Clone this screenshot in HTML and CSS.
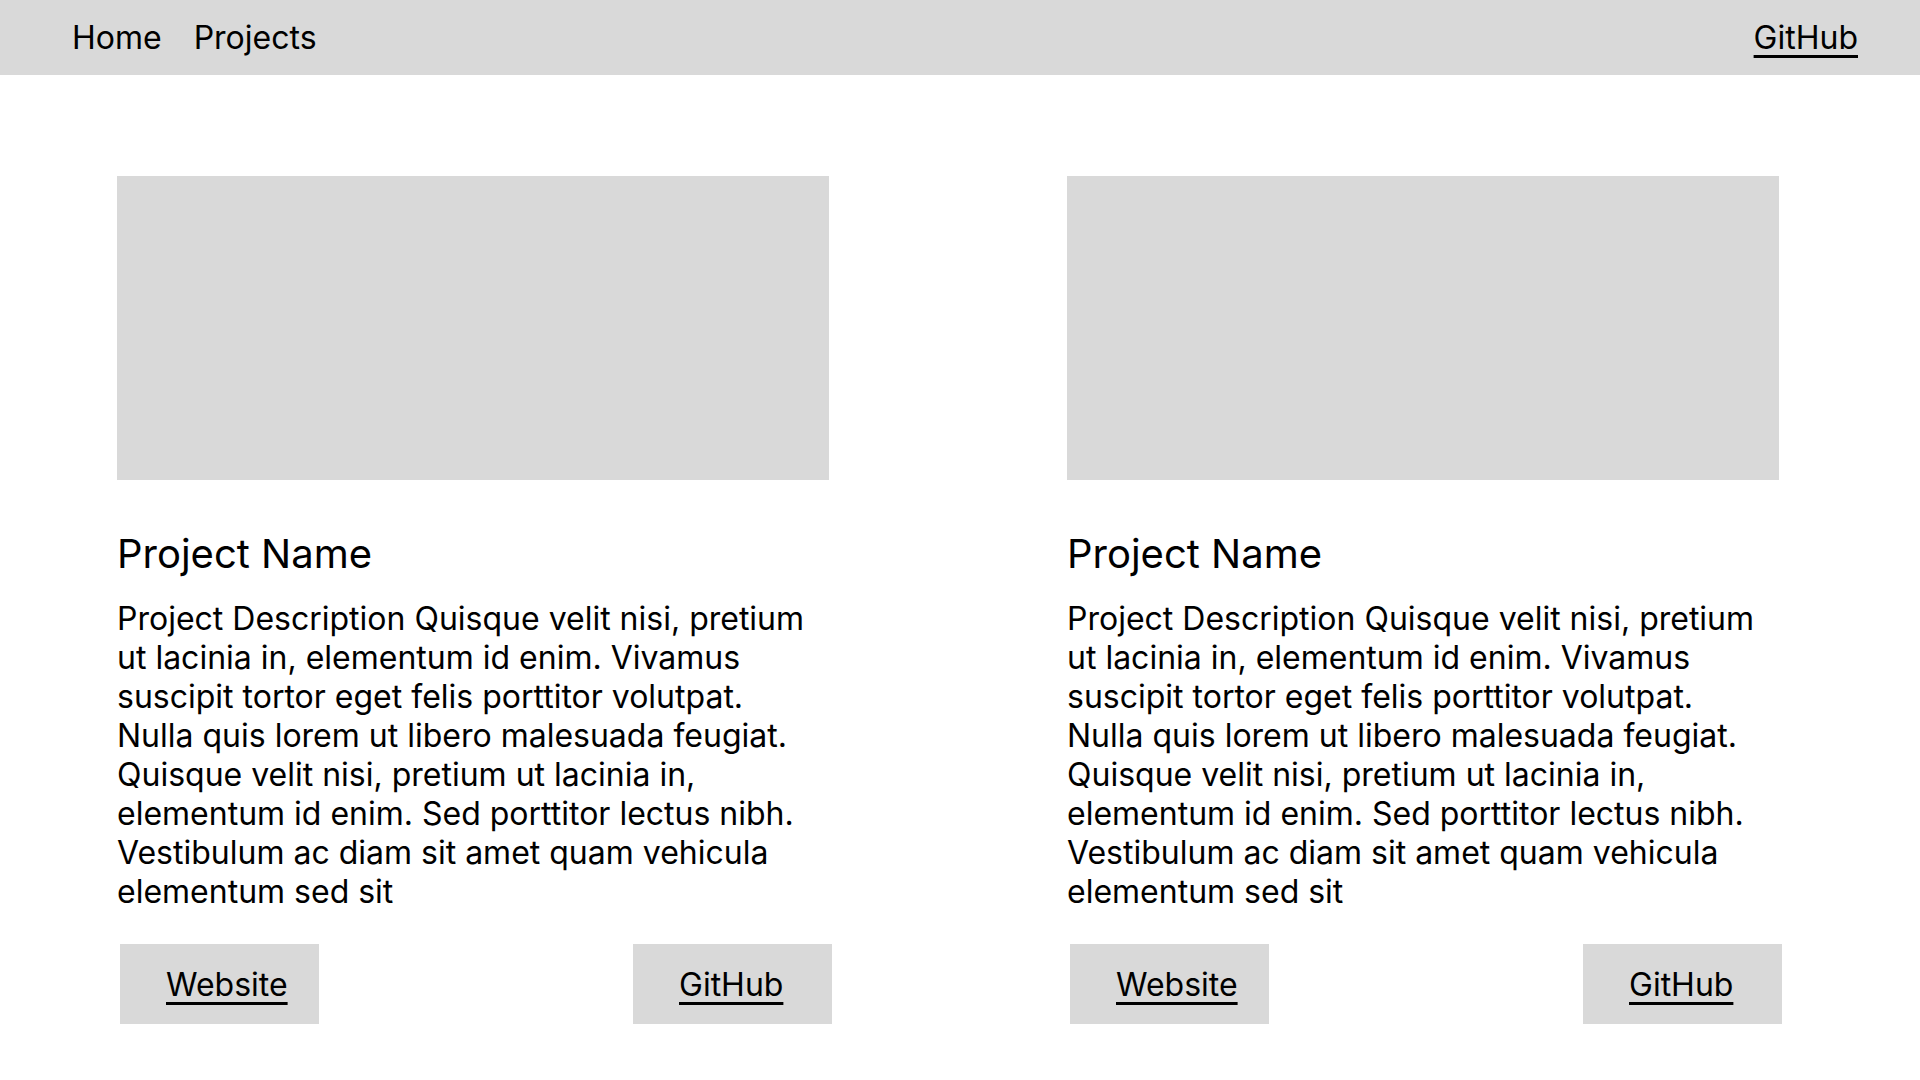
FILE: index.html
```html
<!DOCTYPE html>
<html lang="en">
<head>
<meta charset="utf-8">
<title>Projects</title>
<link rel="stylesheet" href="styles.css">
</head>
<body>
<nav class="nav">
  <div class="nav-left">
    <a class="nav-link" href="#">Home</a>
    <a class="nav-link" href="#">Projects</a>
  </div>
  <a class="nav-link nav-github" href="#">GitHub</a>
</nav>
<main class="grid">
  <article class="card">
    <div class="thumb"></div>
    <h2 class="title">Project Name</h2>
    <p class="desc">Project Description Quisque velit nisi, pretium ut lacinia in, elementum id enim. Vivamus suscipit tortor eget felis porttitor volutpat. Nulla quis lorem ut libero malesuada feugiat. Quisque velit nisi, pretium ut lacinia in, elementum id enim. Sed porttitor lectus nibh. Vestibulum ac diam sit amet quam vehicula elementum sed sit</p>
    <div class="actions">
      <a class="btn" href="#"><span>Website</span></a>
      <a class="btn" href="#"><span>GitHub</span></a>
    </div>
  </article>
  <article class="card">
    <div class="thumb"></div>
    <h2 class="title">Project Name</h2>
    <p class="desc">Project Description Quisque velit nisi, pretium ut lacinia in, elementum id enim. Vivamus suscipit tortor eget felis porttitor volutpat. Nulla quis lorem ut libero malesuada feugiat. Quisque velit nisi, pretium ut lacinia in, elementum id enim. Sed porttitor lectus nibh. Vestibulum ac diam sit amet quam vehicula elementum sed sit</p>
    <div class="actions">
      <a class="btn" href="#"><span>Website</span></a>
      <a class="btn" href="#"><span>GitHub</span></a>
    </div>
  </article>
</main>
</body>
</html>
```
FILE: styles.css
```css
html, body {
  margin: 0;
  padding: 0;
  background: #ffffff;
  color: #000000;
  font-family: Inter, "Noto Sans", sans-serif;
}

.nav {
  height: 75px;
  background: #d9d9d9;
  display: flex;
  align-items: center;
  justify-content: space-between;
  padding: 0 62px 0 72px;
  box-sizing: border-box;
}

.nav-left {
  display: flex;
  gap: 32px;
}

.nav-link {
  font-size: 32px;
  color: #000000;
  text-decoration: none;
}

.nav-github {
  text-decoration: underline;
  text-underline-offset: 6px;
}

.grid {
  display: grid;
  grid-template-columns: 712px 712px;
  column-gap: 238px;
  padding: 101px 0 0 117px;
}

.card {
  display: flex;
  flex-direction: column;
}

.thumb {
  height: 304px;
  background: #d9d9d9;
}

.title {
  margin: 50px 0 0 0;
  font-size: 40px;
  font-weight: 400;
  line-height: 48px;
}

.desc {
  margin: 21px 12px 0 0;
  font-size: 32px;
  line-height: 39px;
}

.actions {
  display: flex;
  justify-content: space-between;
  margin: 33px -3px 0 3px;
}

.btn {
  width: 199px;
  height: 80px;
  box-sizing: border-box;
  padding-left: 46px;
  background: #d9d9d9;
  display: flex;
  align-items: center;
  font-size: 32px;
  color: #000000;
  text-decoration: none;
}

.btn span {
  text-decoration: underline;
  text-underline-offset: 6px;
}
```
